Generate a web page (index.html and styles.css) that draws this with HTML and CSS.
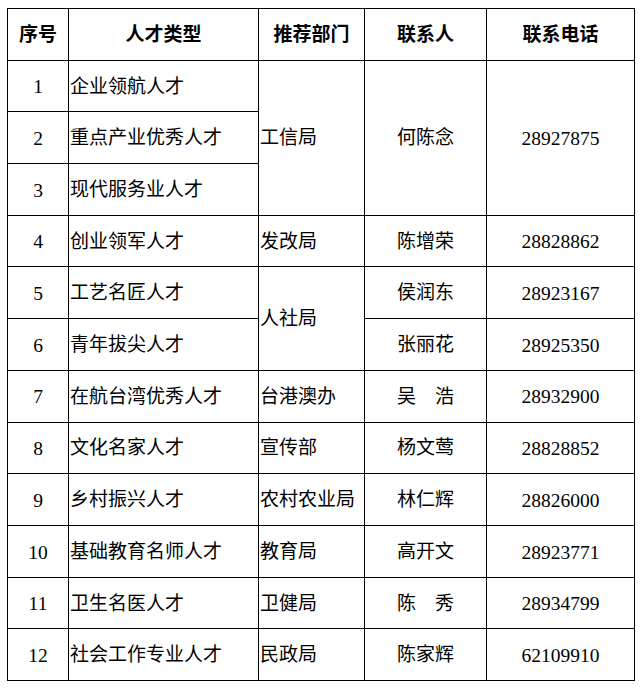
FILE: index.html
```html
<!DOCTYPE html>
<html lang="zh">
<head>
<meta charset="utf-8">
<link rel="stylesheet" href="styles.css">
</head>
<body>
<table class="talent">
<colgroup>
<col class="c-no"><col class="c-type"><col class="c-dept"><col class="c-person"><col class="c-phone">
</colgroup>
<thead>
<tr><th>序号</th><th>人才类型</th><th>推荐部门</th><th>联系人</th><th>联系电话</th></tr>
</thead>
<tbody>
<tr><td class="ctr num">1</td><td class="left">企业领航人才</td><td class="left" rowspan="3">工信局</td><td class="ctr" rowspan="3">何陈念</td><td class="ctr num" rowspan="3">28927875</td></tr>
<tr><td class="ctr num">2</td><td class="left">重点产业优秀人才</td></tr>
<tr><td class="ctr num">3</td><td class="left">现代服务业人才</td></tr>
<tr><td class="ctr num">4</td><td class="left">创业领军人才</td><td class="left">发改局</td><td class="ctr">陈增荣</td><td class="ctr num">28828862</td></tr>
<tr><td class="ctr num">5</td><td class="left">工艺名匠人才</td><td class="left" rowspan="2">人社局</td><td class="ctr">侯润东</td><td class="ctr num">28923167</td></tr>
<tr><td class="ctr num">6</td><td class="left">青年拔尖人才</td><td class="ctr">张丽花</td><td class="ctr num">28925350</td></tr>
<tr><td class="ctr num">7</td><td class="left">在航台湾优秀人才</td><td class="left">台港澳办</td><td class="ctr">吴　浩</td><td class="ctr num">28932900</td></tr>
<tr><td class="ctr num">8</td><td class="left">文化名家人才</td><td class="left">宣传部</td><td class="ctr">杨文莺</td><td class="ctr num">28828852</td></tr>
<tr><td class="ctr num">9</td><td class="left">乡村振兴人才</td><td class="left">农村农业局</td><td class="ctr">林仁辉</td><td class="ctr num">28826000</td></tr>
<tr><td class="ctr num">10</td><td class="left">基础教育名师人才</td><td class="left">教育局</td><td class="ctr">高开文</td><td class="ctr num">28923771</td></tr>
<tr><td class="ctr num">11</td><td class="left">卫生名医人才</td><td class="left">卫健局</td><td class="ctr">陈　秀</td><td class="ctr num">28934799</td></tr>
<tr><td class="ctr num">12</td><td class="left">社会工作专业人才</td><td class="left">民政局</td><td class="ctr">陈家辉</td><td class="ctr num">62109910</td></tr>
</tbody>
</table>
</body>
</html>
```
FILE: styles.css
```css
html, body {
  margin: 0;
  padding: 0;
  background: #fff;
}
body {
  padding: 8px 7px 0 7px;
  font-family: "Liberation Serif", "Noto Sans CJK SC", serif;
  color: #000;
}
.talent {
  border-collapse: collapse;
  table-layout: fixed;
  width: 627px;
  font-size: 19px;
}
.c-no { width: 61px; }
.c-type { width: 190px; }
.c-dept { width: 106px; }
.c-person { width: 122px; }
.c-phone { width: 148px; }
.talent tr {
  height: 51.7px;
}
.talent th,
.talent td {
  border: 1px solid #000;
  padding: 2px 1px 0 1px;
  vertical-align: middle;
  line-height: 1.2;
  white-space: nowrap;
}
.talent th {
  font-weight: 700;
  text-align: center;
  font-size: 19px;
}
.ctr { text-align: center; }
.left { text-align: left; }
.num { font-size: 19.5px; }
```
